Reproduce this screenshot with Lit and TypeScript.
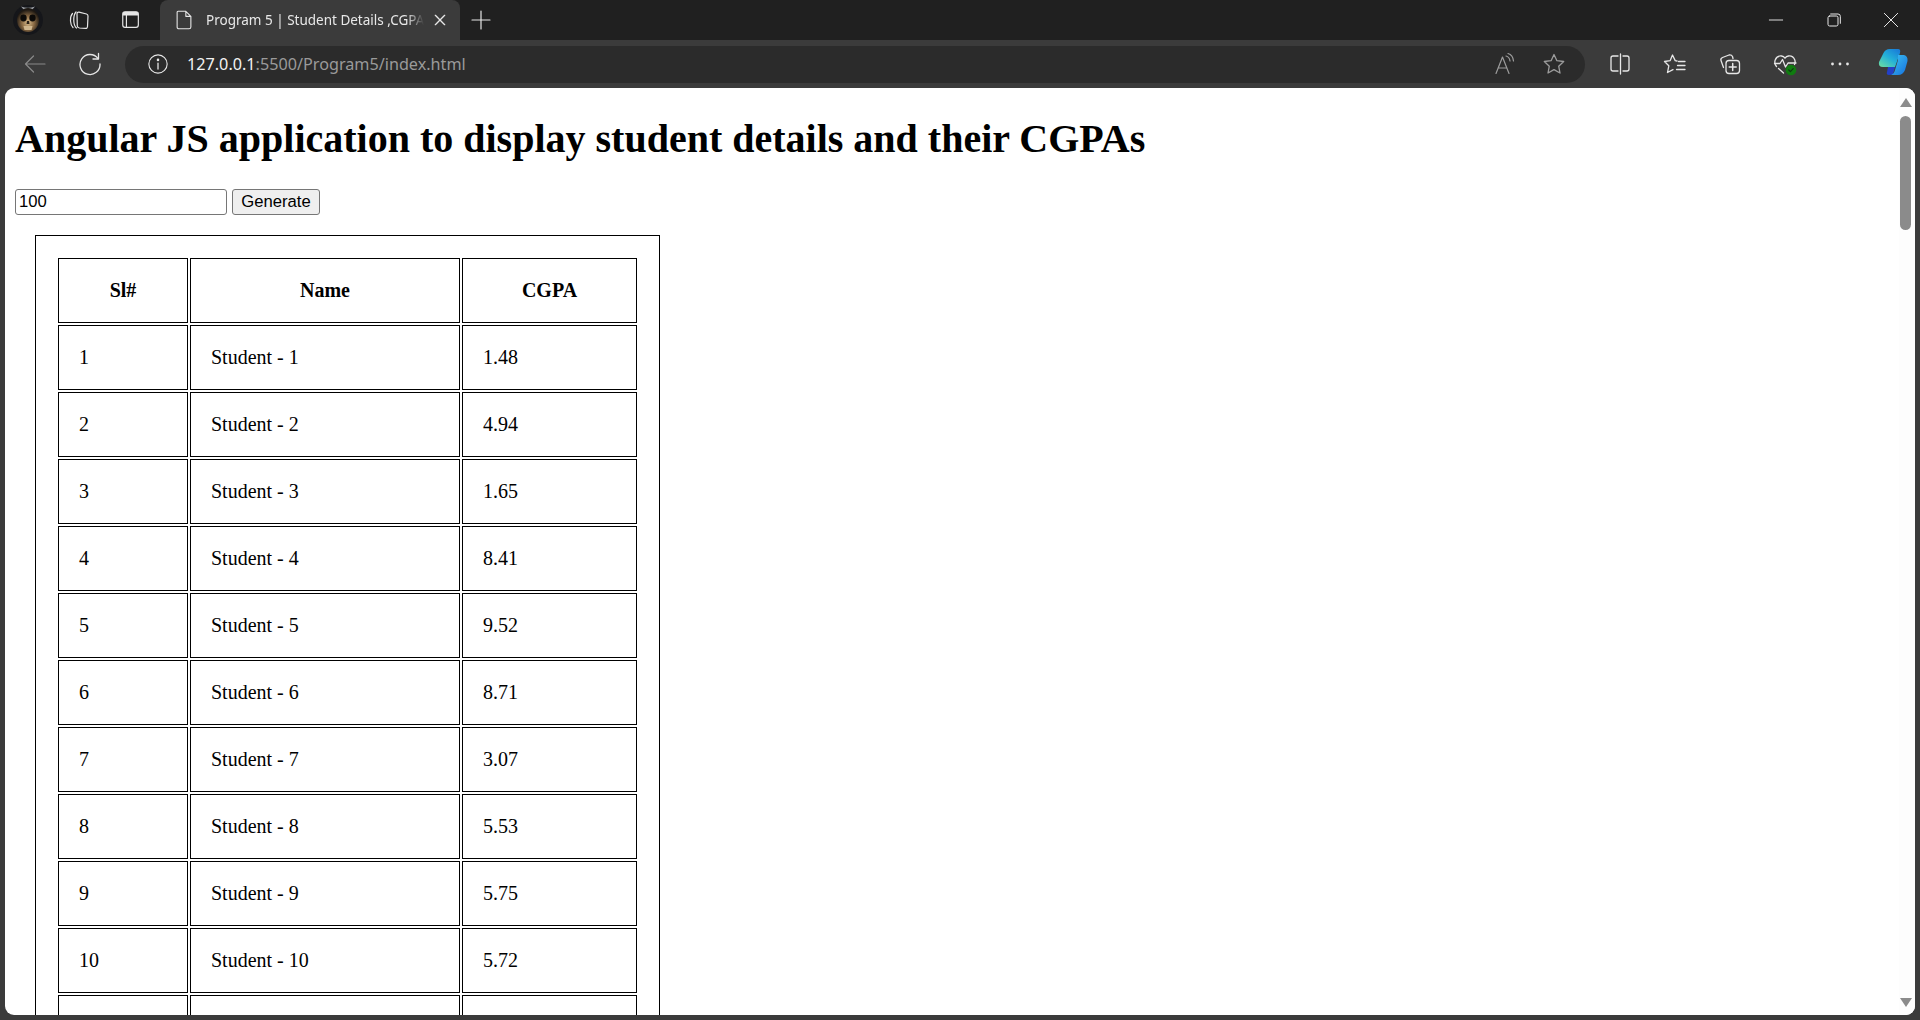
import { LitElement, html, css, svg } from 'lit';
import { customElement } from 'lit/decorators.js';

// the eleventh row only shows its cell borders above the fold
const CGPAS = ['1.48', '4.94', '1.65', '8.41', '9.52', '8.71', '3.07', '5.53', '5.75', '5.72'];

const icon = (size: number, body: unknown, cls = '') =>
  html`<svg class="ic ${cls}" width=${size} height=${size} viewBox="0 0 24 24" fill="none" stroke="currentColor" stroke-width="1.4" stroke-linecap="round" stroke-linejoin="round">${body}</svg>`;

const avatar = html`<svg class="avatar" width="30" height="30" viewBox="0 0 30 30">
  <defs>
    <radialGradient id="sk" cx="50%" cy="62%" r="55%">
      <stop offset="0%" stop-color="#d8bb8c" />
      <stop offset="50%" stop-color="#8a6a44" />
      <stop offset="100%" stop-color="#1d1813" />
    </radialGradient>
  </defs>
  <circle cx="15" cy="15" r="15" fill="#15161a" />
  <path d="M8 1.5 Q15 4 22 1.5 L19 5 H11 Z" fill="#9a9ea3" />
  <ellipse cx="15" cy="15" rx="11" ry="12" fill="url(#sk)" />
  <ellipse cx="10.5" cy="13" rx="3.2" ry="3.4" fill="#0c0a08" />
  <ellipse cx="19.5" cy="13" rx="3.2" ry="3.4" fill="#0c0a08" />
  <path d="M14 16 L16 16 L16.5 19 H13.5 Z" fill="#2a2017" />
  <path d="M10.5 21 h9 l-1 4 h-7 Z" fill="#cfb68e" />
</svg>`;

const copilot = html`<svg width="30" height="28" viewBox="0 0 30 28">
  <defs>
    <linearGradient id="cpa" x1="0" y1="1" x2="0.8" y2="0">
      <stop offset="0%" stop-color="#6fe0a0" />
      <stop offset="55%" stop-color="#23b0d8" />
      <stop offset="100%" stop-color="#1a7fd8" />
    </linearGradient>
    <linearGradient id="cpb" x1="0" y1="0" x2="1" y2="1">
      <stop offset="0%" stop-color="#3ec4f0" />
      <stop offset="100%" stop-color="#1570e0" />
    </linearGradient>
  </defs>
  <path d="M12 1 H20 Q23 1 22 5 L17 19 H5 Q0 19 1 14 L5 6 Q7 1 12 1 Z" fill="url(#cpa)" />
  <path d="M10 19 H17 L15 26 Q14 27 11 27 Q8 27 9 24 Z" fill="#2340c8" />
  <path d="M20 7 H26 Q30 8 29.5 13 L27 22 Q25 27 20 27 H13 Q16 26 17 22 L20 12 Z" fill="url(#cpb)" />
</svg>`;

@customElement('app-root')
export class AppRoot extends LitElement {
  static styles = css`
    :host {
      display: flex;
      flex-direction: column;
      height: 1020px;
      overflow: hidden;
      background: #3b3b3b;
      font-family: 'Noto Sans', sans-serif;
    }

    .ic {
      display: block;
      flex: none;
    }

    /* tab strip */
    .strip {
      height: 40px;
      flex: none;
      display: flex;
      align-items: center;
      background: #202020;
      color: #e6e6e6;
    }
    .avatar {
      margin-left: 13px;
      flex: none;
    }
    .strip-btn {
      display: flex;
      justify-content: center;
      flex: none;
    }
    .workspaces {
      width: 24px;
      margin-left: 24px;
    }
    .vtabs {
      width: 24px;
      margin-left: 28px;
    }
    .tab {
      width: 300px;
      height: 40px;
      margin-left: 17px;
      flex: none;
      box-sizing: border-box;
      padding: 0 12px 0 13px;
      display: flex;
      align-items: center;
      background: #3b3b3b;
      border-radius: 8px 8px 0 0;
    }
    .tab-title {
      width: 218px;
      margin-left: 11px;
      flex: none;
      overflow: hidden;
      white-space: nowrap;
      font-size: 13.5px;
      color: #e8e8e8;
      -webkit-mask-image: linear-gradient(90deg, #000 92%, transparent 100%);
      mask-image: linear-gradient(90deg, #000 92%, transparent 100%);
    }
    .tab-close {
      margin-left: 8px;
    }
    .new-tab {
      margin-left: 9px;
    }
    .win {
      margin-left: auto;
      display: flex;
      color: #e8e8e8;
    }
    .win-btn {
      width: 57.5px;
      display: flex;
      justify-content: center;
    }

    /* toolbar */
    .toolbar {
      height: 48px;
      flex: none;
      display: flex;
      align-items: center;
      color: #e6e6e6;
    }
    .back {
      margin-left: 23px;
      color: #8a8a8a;
    }
    .reload {
      margin-left: 31px;
    }
    .address {
      width: 1460px;
      height: 37px;
      margin-left: 23px;
      flex: none;
      box-sizing: border-box;
      padding: 0 19px 0 22px;
      display: flex;
      align-items: center;
      border-radius: 18.5px;
      background: #2b2b2b;
    }
    .url {
      margin-left: 18px;
      font-size: 16.2px;
      color: #9a9a9a;
      white-space: nowrap;
    }
    .url b {
      font-weight: 400;
      color: #f2f2f2;
    }
    .addr-right {
      margin-left: auto;
      display: flex;
      gap: 25px;
      color: #9c9c9c;
    }
    .tools {
      display: flex;
      align-items: center;
      margin-left: 23px;
      gap: 31px;
    }
    .tools .copilot {
      margin-left: -5px;
    }

    /* page */
    .viewport {
      flex: 1;
      min-height: 0;
      margin: 0 5px 5px;
      display: flex;
      background: #fff;
      border-radius: 9px;
      overflow: hidden;
      font-family: 'Liberation Serif', serif;
      font-size: 20px;
      color: #000;
    }
    .page {
      flex: 1;
      min-width: 0;
      padding: 0 10px;
    }
    h1 {
      margin: 28px 0 27px;
      font-size: 40px;
      line-height: 46px;
      font-weight: 700;
    }
    .controls {
      display: flex;
      gap: 5px;
    }
    input,
    button {
      box-sizing: border-box;
      height: 26px;
      margin: 0;
      font-family: 'Liberation Sans', sans-serif;
      font-size: 16.67px;
      color: #000;
      border: 1px solid #767676;
      border-radius: 3px;
    }
    input {
      width: 212px;
      padding: 0 3px;
      background: #fff;
    }
    button {
      width: 88px;
      padding: 0;
      background: #efefef;
    }
    .box {
      width: 625px;
      box-sizing: border-box;
      margin: 20px 0 0 20px;
      padding: 20px;
      border: 1px solid #000;
    }
    table {
      border-collapse: separate;
      border-spacing: 2px;
      table-layout: fixed;
      width: 583px;
    }
    th,
    td {
      box-sizing: border-box;
      height: 65px;
      padding: 20px;
      border: 1px solid #000;
      line-height: 23px;
    }
    th {
      text-align: center;
    }
    td {
      text-align: left;
    }
    .c1 {
      width: 130px;
    }
    .c2 {
      width: 270px;
    }
    .c3 {
      width: 175px;
    }

    /* scrollbar */
    .scrollbar {
      width: 16px;
      flex: none;
      display: flex;
      flex-direction: column;
      align-items: flex-start;
      padding-top: 10px;
      box-sizing: border-box;
      background: #fdfdfd;
    }
    .arrow {
      display: block;
      margin-left: 1px;
    }
    .thumb {
      width: 11px;
      height: 114px;
      margin: 9px 0 0 1px;
      border-radius: 6px;
      background: #8b8b8b;
    }
    .arrow.down {
      margin-top: auto;
      margin-bottom: 8px;
    }
  `;

  render() {
    return html`
      <div class="strip">
        ${avatar}
        <div class="strip-btn workspaces">
          ${icon(24, svg`<path d="M5.5 5.5 Q3.2 8 3.5 13 Q3.8 17.5 6 19.5" stroke-width="1.2"/><path d="M9 4 Q6.5 6.5 6.8 13 Q7 18 9.5 20" stroke-width="1.2"/><path d="M12 4.2 L19.5 6 Q21 6.5 21 8 L20.5 18.5 Q20.3 20.5 18.5 20.3 L12.5 20 Q10.5 19.8 10.3 18 L10 6 Q10 4 12 4.2 Z" stroke-width="1.2"/>`)}
        </div>
        <div class="strip-btn vtabs">
          ${icon(22, svg`<rect x="3" y="3" width="17" height="17" rx="2.5" stroke-width="1.3"/><path d="M3 5.5 a2.5 2.5 0 0 1 2.5 -2.5 h12 a2.5 2.5 0 0 1 2.5 2.5 V7 H3 Z" fill="currentColor" stroke="none"/><path d="M7 7 V20" stroke-width="1.3"/>`)}
        </div>
        <div class="tab">
          ${icon(22, svg`<path d="M5.5 2.5 H14 L19.5 8 V19.5 Q19.5 21.5 17.5 21.5 H6.5 Q4.5 21.5 4.5 19.5 V3.5 Q4.5 2.5 5.5 2.5 Z M14 2.5 V8 H19.5" stroke-width="1.2"/>`)}
          <span class="tab-title">Program 5 | Student Details ,CGPAs</span>
          <span class="tab-close">${icon(16, svg`<path d="M5 5 L19 19 M19 5 L5 19" stroke-width="2"/>`)}</span>
        </div>
        <span class="new-tab">${icon(24, svg`<path d="M12 3 V21 M3 12 H21" stroke-width="1.2"/>`)}</span>
        <div class="win">
          <span class="win-btn">${icon(16, svg`<path d="M2 12 H22" stroke-width="1.4"/>`)}</span>
          <span class="win-btn">${icon(16, svg`<rect x="3" y="6" width="15" height="15" rx="2.5" stroke-width="1.5"/><path d="M7 3 H18 Q21.5 3 21.5 6.5 V17" stroke-width="1.5"/>`)}</span>
          <span class="win-btn">${icon(16, svg`<path d="M2 2 L22 22 M22 2 L2 22" stroke-width="1.5"/>`)}</span>
        </div>
      </div>

      <div class="toolbar">
        <span class="back">${icon(24, svg`<path d="M2.5 12 H22 M10.5 4 L2.5 12 L10.5 20" stroke-width="1.2"/>`)}</span>
        <span class="reload">${icon(24, svg`<path d="M20 6.5 A10 10 0 1 0 22 12" stroke-width="1.3"/><path d="M20.5 1.5 V7 H15" stroke-width="1.3"/>`)}</span>
        <div class="address">
          ${icon(22, svg`<circle cx="12" cy="12" r="10" stroke-width="1.2"/><path d="M12 11 V17.5" stroke-width="1.4"/><circle cx="12" cy="7.5" r="0.7" fill="currentColor"/>`)}
          <span class="url"><b>127.0.0.1</b>:5500/Program5/index.html</span>
          <div class="addr-right">
            ${icon(24, svg`<path d="M3 21.5 L9.5 5 L16 21.5 M5.2 16 H13.8" stroke-width="1.2"/><path d="M13 4 Q16.5 5 17 9 M15 1.5 Q20 3 20.5 9" stroke-width="1.2"/>`)}
            ${icon(24, svg`<path d="M12 2.5 L14.9 8.7 L21.7 9.5 L16.7 14.2 L18 21 L12 17.6 L6 21 L7.3 14.2 L2.3 9.5 L9.1 8.7 Z" stroke-width="1.3"/>`)}
          </div>
        </div>
        <div class="tools">
          ${icon(24, svg`<path d="M10 4 H5 Q3 4 3 6 V17 Q3 19 5 19 H10 M15 4 H19 Q21 4 21 6 V17 Q21 19 19 19 H15 M12.5 2 V22" stroke-width="1.3"/>`)}
          ${icon(24, svg`<path d="M14 9 L12.2 8.6 L9.5 3 L7.2 8.6 L1.5 9.5 L5.8 13.8 L4.5 20.5 L10 17.6" stroke-width="1.3"/><path d="M15.5 9.5 H22 M14.5 13.5 H22 M13.5 17.5 H22" stroke-width="1.3"/>`)}
          ${icon(24, svg`<path d="M5.5 15.5 L3 8.5 Q2.3 6.5 4.5 5.5 L11 3 Q13.5 2.5 14.5 4.5 L15 6.5" stroke-width="1.3"/><rect x="8" y="8.5" width="13.5" height="13" rx="3" stroke-width="1.3"/><path d="M14.7 11.5 V18.5 M11.2 15 H18.2" stroke-width="1.5"/>`)}
          <svg class="ic" width="24" height="24" viewBox="0 0 24 24" fill="none" stroke="currentColor" stroke-width="1.3" stroke-linecap="round" stroke-linejoin="round">
            <path d="M3.5 14.5 Q1 11.5 2.2 8 Q4 3.5 8.5 4 Q10.7 4.3 12 6.2 Q13.3 4.3 15.5 4 Q20 3.5 21.8 8 Q22.6 10.5 21.5 12.5" />
            <path d="M1.5 11.5 H7 L9.5 7.5 L12.5 15 L15 11 H23" />
            <path d="M5.5 16.5 L10.5 21" />
            <circle cx="18" cy="18" r="4.7" fill="#107c10" stroke="#107c10" />
            <path d="M15.8 18 L17.4 19.6 L20.2 16.6" stroke="#0d3a10" stroke-width="1.2" />
          </svg>
          ${icon(24, svg`<circle cx="4.5" cy="12" r="1.4" fill="currentColor" stroke="none"/><circle cx="12" cy="12" r="1.4" fill="currentColor" stroke="none"/><circle cx="19.5" cy="12" r="1.4" fill="currentColor" stroke="none"/>`)}
          <span class="copilot">${copilot}</span>
        </div>
      </div>

      <div class="viewport">
        <div class="page">
          <h1>Angular JS application to display student details and their CGPAs</h1>
          <div class="controls">
            <input type="text" .value=${'100'} />
            <button>Generate</button>
          </div>
          <div class="box">
            <table>
              <thead>
                <tr>
                  <th class="c1">Sl#</th>
                  <th class="c2">Name</th>
                  <th class="c3">CGPA</th>
                </tr>
              </thead>
              <tbody>
                ${CGPAS.map(
                  (cgpa, i) => html`<tr>
                    <td>${i + 1}</td>
                    <td>Student - ${i + 1}</td>
                    <td>${cgpa}</td>
                  </tr>`
                )}
                <tr><td></td><td></td><td></td></tr>
              </tbody>
            </table>
          </div>
        </div>
        <div class="scrollbar">
          <svg class="arrow" width="12" height="9" viewBox="0 0 12 9"><path d="M6 0 L12 9 H0 Z" fill="#8b8b8b" /></svg>
          <div class="thumb"></div>
          <svg class="arrow down" width="12" height="9" viewBox="0 0 12 9"><path d="M0 0 H12 L6 9 Z" fill="#8b8b8b" /></svg>
        </div>
      </div>
    `;
  }
}
